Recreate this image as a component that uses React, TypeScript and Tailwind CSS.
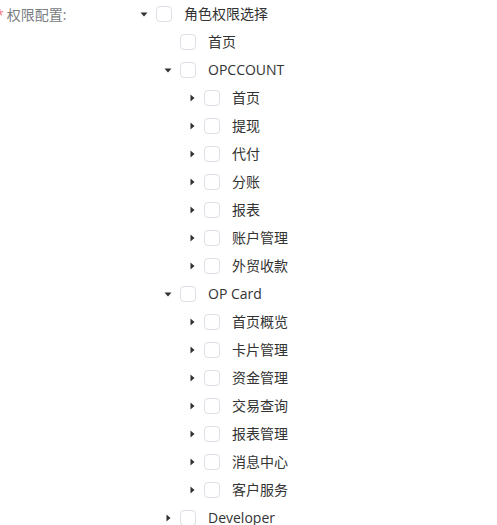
import React from 'react';

type TreeNode = {
  title: string;
  expanded?: boolean;
  leaf?: boolean;
  children?: TreeNode[];
};

const closed = (title: string): TreeNode => ({ title });

const treeData: TreeNode[] = [
  {
    title: '角色权限选择',
    expanded: true,
    children: [
      { title: '首页', leaf: true },
      {
        title: 'OPCCOUNT',
        expanded: true,
        children: ['首页', '提现', '代付', '分账', '报表', '账户管理', '外贸收款'].map(closed),
      },
      {
        title: 'OP Card',
        expanded: true,
        children: ['首页概览', '卡片管理', '资金管理', '交易查询', '报表管理', '消息中心', '客户服务'].map(closed),
      },
      closed('Developer'),
    ],
  },
];

const indentClass = ['pl-0', 'pl-6', 'pl-12'];

function Caret({ open }: { open?: boolean }) {
  return open ? (
    <svg width="8" height="5" viewBox="0 0 8 5" className="text-[#303133]">
      <path d="M0.5 0.5 H7.5 L4 4.5 Z" fill="currentColor" />
    </svg>
  ) : (
    <svg width="5" height="8" viewBox="0 0 5 8" className="text-[#303133]">
      <path d="M0.5 0.5 V7.5 L4.5 4 Z" fill="currentColor" />
    </svg>
  );
}

function TreeRow({ node, level }: { node: TreeNode; level: number }) {
  return (
    <>
      <div className={`flex h-7 items-center ${indentClass[level]}`}>
        <span className="flex w-6 shrink-0 items-center justify-center">
          {!node.leaf && <Caret open={node.expanded} />}
        </span>
        <span className="h-4 w-4 shrink-0 rounded-[4px] border border-[#dcdfe6] bg-white" />
        <span className="ml-[12px] whitespace-nowrap text-[14px] leading-none text-[#333]">{node.title}</span>
      </div>
      {node.expanded && node.children?.map((child, i) => (
        <TreeRow key={`${level}-${i}`} node={child} level={level + 1} />
      ))}
    </>
  );
}

export default function App() {
  return (
    <div
      className="h-[525px] w-[497px] overflow-hidden bg-white"
      style={{ fontFamily: '"Open Sans", "Noto Sans CJK SC", sans-serif' }}
    >
      <div className="flex">
        <div className="-ml-[4px] flex h-7 w-[136px] shrink-0 items-center text-[14px] text-[#7a7d82]">
          <span className="mr-[3px] text-[#f56c6c]">*</span>
          <span>权限配置:</span>
        </div>
        <div className="flex flex-col">
          {treeData.map((node, i) => (
            <TreeRow key={i} node={node} level={0} />
          ))}
        </div>
      </div>
    </div>
  );
}
